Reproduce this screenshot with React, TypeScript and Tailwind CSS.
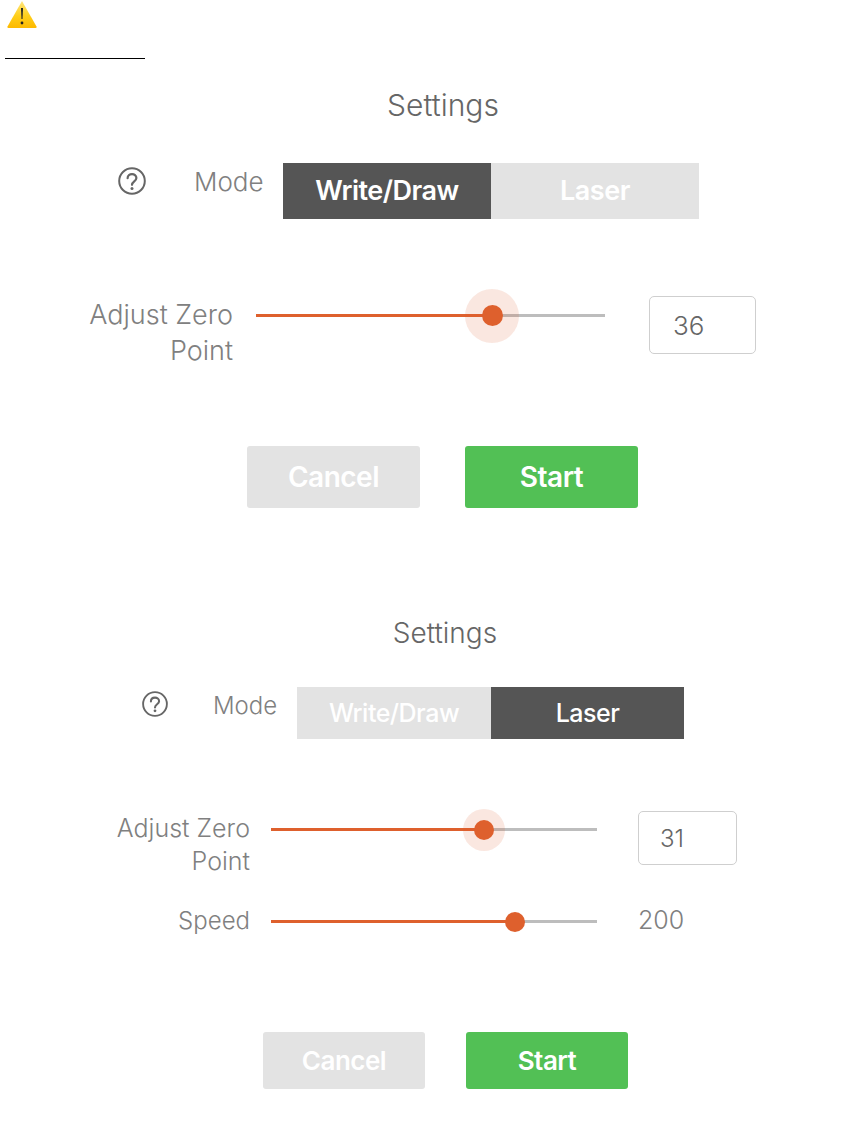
const font = "font-['Inter','Open_Sans',sans-serif]";

function Warning() {
  return (
    <svg width="34" height="30" viewBox="0 0 34 30" className="block">
      <defs>
        <linearGradient id="w" x1="0" y1="0" x2="0" y2="1">
          <stop offset="0" stopColor="#ffe680" />
          <stop offset="0.55" stopColor="#ffcf1a" />
          <stop offset="1" stopColor="#fdb900" />
        </linearGradient>
      </defs>
      <path d="M17 1 L31.5 26.5 Q32 28 30.5 28 L3.5 28 Q2 28 2.5 26.5 Z" fill="url(#w)" />
      <path d="M16 8 H18 L17.5 19 H16.5 Z" fill="#222" />
      <circle cx="17" cy="23" r="1.4" fill="#222" />
    </svg>
  );
}

function Help({ size }: { size: number }) {
  return (
    <svg width={size} height={size} viewBox="0 0 28 28" fill="none" stroke="#666" className="block shrink-0">
      <circle cx="14" cy="14" r="12.8" strokeWidth="2" />
      <path d="M9.6 11.2 C9.6 5.8 18.4 5.8 18.4 11 C18.4 14.2 14 14.4 14 17.8" strokeWidth="2.2" strokeLinecap="round" />
      <circle cx="14" cy="21.4" r="1.5" fill="#666" stroke="none" />
    </svg>
  );
}

function Slider({ width, pos, r, halo }: { width: number; pos: number; r: number; halo: number }) {
  return (
    <div className="relative h-[3px] bg-[#bdbdbd]" style={{ width }}>
      <div className="h-[3px] bg-[#de602d]" style={{ width: pos }} />
      {halo > 0 && (
        <div
          className="absolute rounded-full bg-[#de602d]/15"
          style={{ left: pos - halo, top: 1.5 - halo, width: halo * 2, height: halo * 2 }}
        />
      )}
      <div
        className="absolute rounded-full bg-[#de602d]"
        style={{ left: pos - r, top: 1.5 - r, width: r * 2, height: r * 2 }}
      />
    </div>
  );
}

export default function App() {
  return (
    <div className={`${font} w-[857px] h-[1135px] bg-white text-[#808080] font-light overflow-hidden`}>
      <div className="pl-[5px] h-[28px]">
        <Warning />
      </div>
      <div className="ml-[5px] mt-[30px] w-[140px] h-px bg-black" />

      {/* First panel */}
      <div className="mt-[30px] ml-[187px] w-[512px] text-center text-[30px] leading-[32px] text-[#666]">Settings</div>
      <div className="mt-[42px] flex items-center h-[56px]">
        <div className="ml-[118px] -mt-[20px]"><Help size={28} /></div>
        <div className="ml-[48px] w-[89px] -mt-[18px] text-[26px] leading-[38px]">Mode</div>
        <div className="flex w-[416px] h-[56px] text-[27px] font-semibold tracking-[-0.5px]">
          <div className="w-[208px] bg-[#555555] text-white flex items-center justify-center">Write/Draw</div>
          <div className="w-[208px] bg-[#e3e3e3] text-white flex items-center justify-center">Laser</div>
        </div>
      </div>
      <div className="mt-[77px] flex items-start h-[58px]">
        <div className="w-[233px] text-right text-[27px] leading-[36px] mt-[1px]">
          Adjust Zero
          <br />
          Point
        </div>
        <div className="ml-[23px] mt-[18px]"><Slider width={349} pos={236} r={10.5} halo={27} /></div>
        <div className="ml-[44px] w-[107px] h-[58px] rounded-[5px] border border-[#cfcfcf] pl-[23px] flex items-center text-[26px] text-[#666]">36</div>
      </div>
      <div className="mt-[92px] ml-[247px] flex gap-[45px]">
        <div className="w-[173px] h-[62px] rounded-[3px] bg-[#e3e3e3] text-white text-[28px] font-semibold tracking-[-0.5px] flex items-center justify-center">Cancel</div>
        <div className="w-[173px] h-[62px] rounded-[3px] bg-[#52c055] text-white text-[28px] font-semibold tracking-[-0.5px] flex items-center justify-center">Start</div>
      </div>

      {/* Second panel */}
      <div className="mt-[110px] ml-[203px] w-[484px] text-center text-[28px] leading-[30px] text-[#666]">Settings</div>
      <div className="mt-[39px] flex items-center h-[52px]">
        <div className="ml-[142px] -mt-[18px]"><Help size={26} /></div>
        <div className="ml-[45px] w-[84px] -mt-[14px] text-[24px]">Mode</div>
        <div className="flex w-[387px] h-[52px] text-[25px] font-medium tracking-[-0.5px]">
          <div className="w-[194px] pt-px bg-[#e3e3e3] text-white flex items-center justify-center">Write/Draw</div>
          <div className="w-[193px] pt-px bg-[#555555] text-white flex items-center justify-center">Laser</div>
        </div>
      </div>
      <div className="mt-[72px] flex items-start h-[54px]">
        <div className="w-[250px] text-right text-[25px] leading-[33px] mt-px">
          Adjust Zero
          <br />
          Point
        </div>
        <div className="ml-[21px] mt-[17px]"><Slider width={326} pos={213} r={10} halo={21} /></div>
        <div className="ml-[41px] w-[99px] h-[54px] pt-px rounded-[5px] border border-[#cfcfcf] pl-[21px] flex items-center text-[24px] text-[#666]">31</div>
      </div>
      <div className="mt-[40px] flex items-center h-[33px]">
        <div className="w-[250px] text-right text-[24px] -mt-px">Speed</div>
        <div className="ml-[21px]"><Slider width={326} pos={244} r={10} halo={0} /></div>
        <div className="ml-[41px] text-[25px] -mt-px">200</div>
      </div>
      <div className="mt-[94px] ml-[263px] flex gap-[41px]">
        <div className="w-[162px] h-[57px] rounded-[3px] bg-[#e3e3e3] text-white text-[26px] font-semibold tracking-[-0.5px] flex items-center justify-center">Cancel</div>
        <div className="w-[162px] h-[57px] rounded-[3px] bg-[#52c055] text-white text-[26px] font-semibold tracking-[-0.5px] flex items-center justify-center">Start</div>
      </div>
    </div>
  );
}
